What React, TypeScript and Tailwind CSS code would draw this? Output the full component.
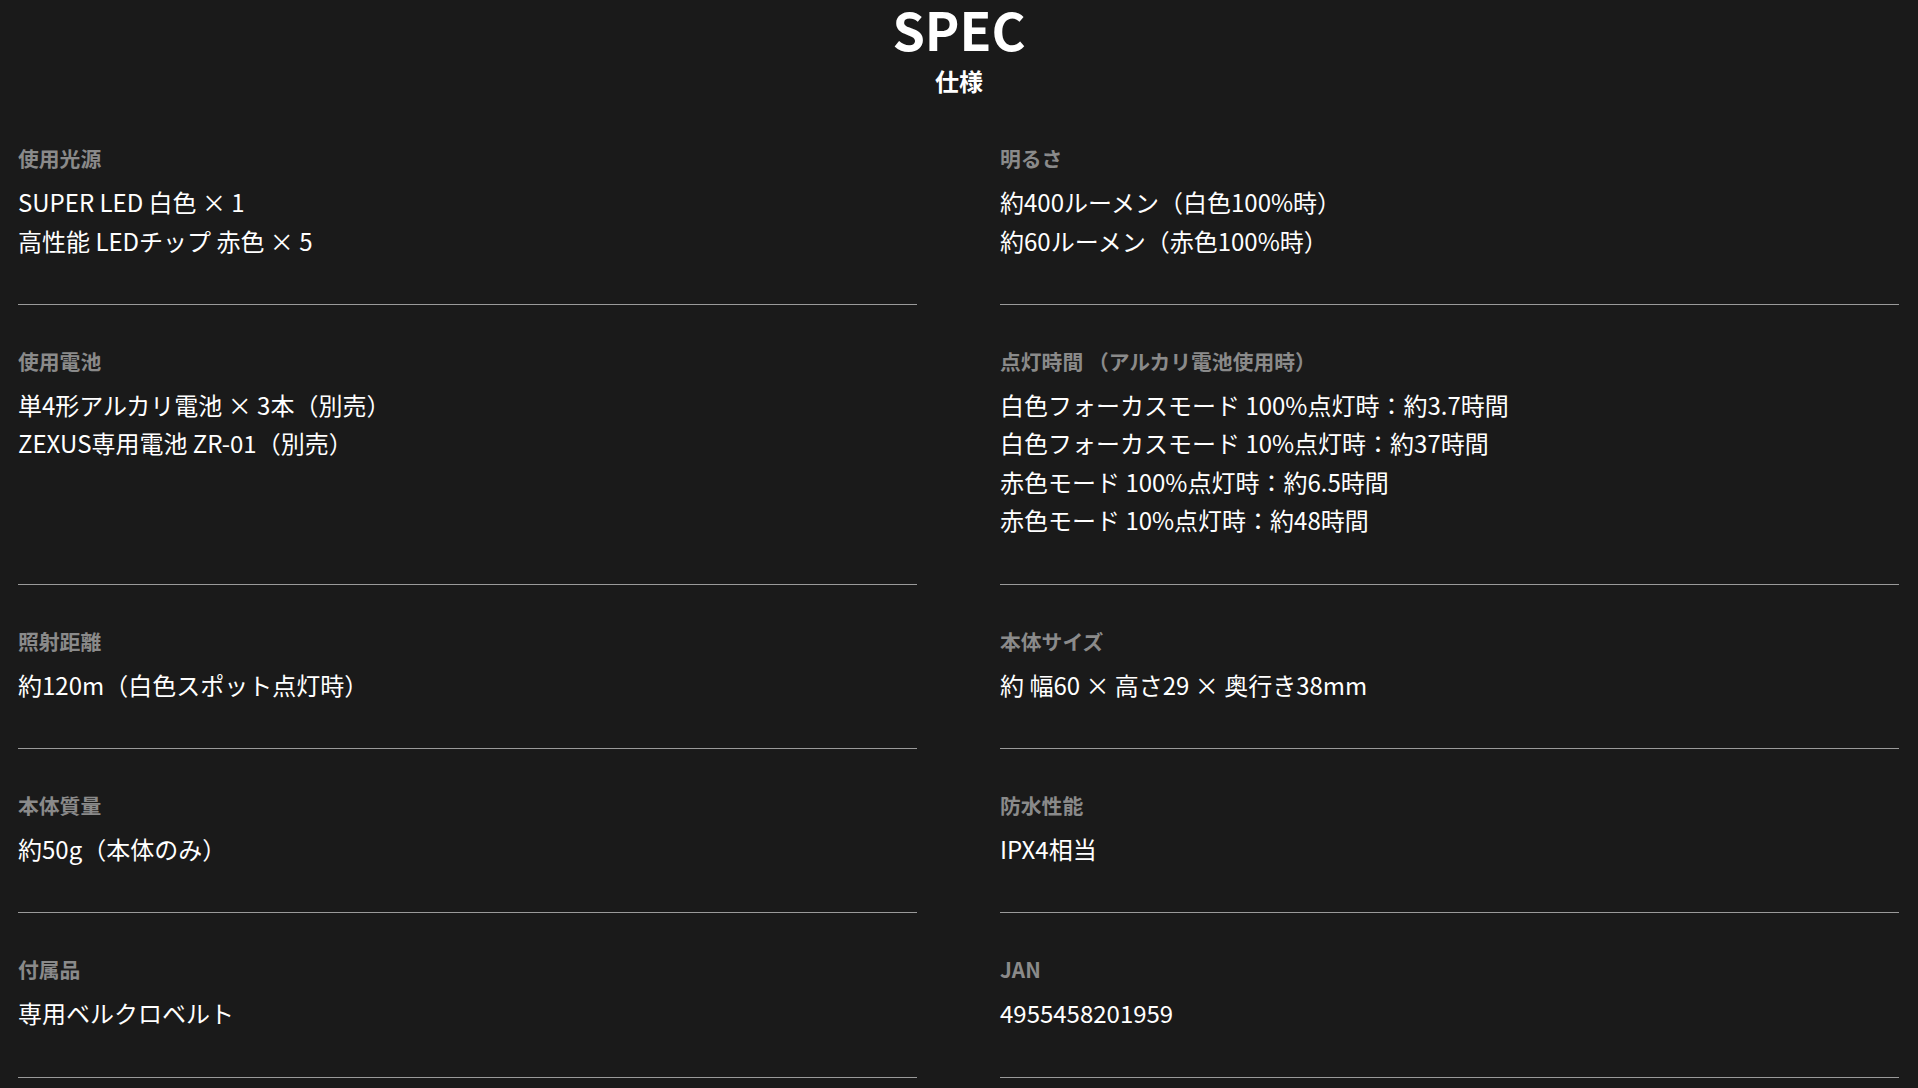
const font = { fontFamily: '"Noto Sans CJK JP", "Noto Sans", sans-serif' }

// ── Data ────────────────────────────────────────────────────────────────────
const specs: { label: string; values: string[] }[] = [
  { label: '使用光源', values: ['SUPER LED 白色 × 1', '高性能 LEDチップ 赤色 × 5'] },
  { label: '明るさ', values: ['約400ルーメン（白色100%時）', '約60ルーメン（赤色100%時）'] },
  { label: '使用電池', values: ['単4形アルカリ電池 × 3本（別売）', 'ZEXUS専用電池 ZR-01（別売）'] },
  {
    label: '点灯時間 （アルカリ電池使用時）',
    values: [
      '白色フォーカスモード 100%点灯時：約3.7時間',
      '白色フォーカスモード 10%点灯時：約37時間',
      '赤色モード 100%点灯時：約6.5時間',
      '赤色モード 10%点灯時：約48時間',
    ],
  },
  { label: '照射距離', values: ['約120m（白色スポット点灯時）'] },
  { label: '本体サイズ', values: ['約 幅60 × 高さ29 × 奥行き38mm'] },
  { label: '本体質量', values: ['約50g（本体のみ）'] },
  { label: '防水性能', values: ['IPX4相当'] },
  { label: '付属品', values: ['専用ベルクロベルト'] },
  { label: 'JAN', values: ['4955458201959'] },
]

// ── Component ───────────────────────────────────────────────────────────────
export default function App() {
  return (
    <div className="min-h-screen w-full bg-[#1a1a1a] text-white" style={font}>
      {/* Heading */}
      <div className="flex flex-col items-center">
        <h2 className="text-[52px] font-bold leading-[1.12]">SPEC</h2>
        <p className="mt-[5px] text-[24px] font-bold leading-[1.5]">仕様</p>
      </div>

      {/* Spec grid */}
      <div className="mt-[3px] grid grid-cols-2 gap-x-[83px] pl-[18px] pr-[19px]">
        {specs.map((s) => (
          <div key={s.label} className="border-b border-[#9a9a9a] pt-[41px] pb-[44px]">
            <p className="text-[20.8px] font-bold leading-[30px] text-[#8a8a8a]">{s.label}</p>
            <div className="mt-[10px] text-[24px] leading-[38.4px]">
              {s.values.map((v) => (
                <p key={v}>{v}</p>
              ))}
            </div>
          </div>
        ))}
      </div>
    </div>
  )
}
